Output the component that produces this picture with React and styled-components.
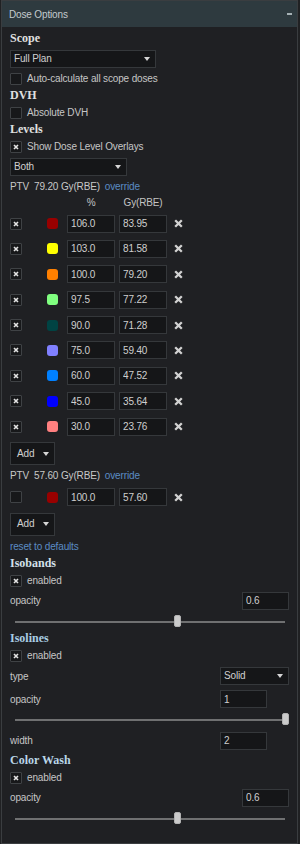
import React from 'react';
import styled, { createGlobalStyle } from 'styled-components';

const GlobalStyle = createGlobalStyle`
  html, body {
    margin: 0;
    padding: 0;
    background: #202123;
  }
  body {
    font-family: "Liberation Sans", Arial, sans-serif;
    letter-spacing: -0.15px;
  }
`;

const Panel = styled.div`
  box-sizing: border-box;
  width: 297px;
  min-height: 844px;
  margin-left: 1px;
  border: 1px solid #3a3d40;
  background: #1f2023;
  display: flex;
  flex-direction: column;
`;

const PanelHeader = styled.div`
  height: 26px;
  display: flex;
  align-items: center;
  justify-content: space-between;
  padding: 0 5px 0 7px;
  background: #2e3a3f;
  color: #c4cbce;
  font-size: 10px;
`;

const Collapse = styled.span`
  width: 5px;
  height: 2px;
  background: #a6b1b5;
`;

const PanelBody = styled.div`
  display: flex;
  flex-direction: column;
  gap: 5px;
  padding: 5.5px 8px 17px;
  font-size: 10px;
  color: #c6c6c6;
`;

const SectionTitle = styled.div`
  margin-top: -2px;
  height: 14px;
  line-height: 14px;
  font-family: "Liberation Serif", "Times New Roman", serif;
  font-weight: bold;
  font-size: 12px;
  letter-spacing: 0;
  color: ${p => p.$tone || '#e0e0e0'};
`;

const CheckRow = styled.label`
  display: flex;
  align-items: center;
  gap: 5px;
  height: 12px;
  line-height: 12px;
`;

const Box = styled.span`
  box-sizing: border-box;
  flex: none;
  width: 12px;
  height: 12px;
  display: flex;
  align-items: center;
  justify-content: center;
  background: #17181a;
  border: 1px solid #3f4245;
  border-radius: 1px;
`;

const Dropdown = styled.div`
  box-sizing: border-box;
  width: ${p => p.$w}px;
  height: ${p => p.$h || 18}px;
  margin-top: ${p => p.$mt || 0}px;
  display: flex;
  align-items: center;
  justify-content: space-between;
  padding: 0 5px 0 ${p => p.$pl || 3}px;
  background: #151618;
  border: 1px solid #35383b;
  color: #d0d0d0;
  line-height: 12px;
`;

const PtvLine = styled.div`
  height: 12px;
  line-height: 12px;
  color: #c8c8c8;
`;

const Dose = styled.span`
  margin-left: 5px;
`;

const Link = styled.span`
  margin-left: ${p => p.$ml || 0}px;
  color: #5b8cc5;
`;

const ColumnHead = styled.div`
  display: flex;
  height: 12px;
  line-height: 12px;
  margin-top: -1px;
  padding-left: 57px;
  gap: 4px;
  color: #c4c4c4;
`;

const HeadCell = styled.span`
  width: 48px;
  text-align: center;
`;

const LevelList = styled.div`
  display: flex;
  flex-direction: column;
  gap: 7.4px;
  margin-top: 1px;
`;

const LevelRow = styled.div`
  display: flex;
  align-items: center;
  height: 18px;
`;

const Swatch = styled.span`
  width: 11px;
  height: 11px;
  margin: 0 9px 0 25px;
  border-radius: 3px;
  background: ${p => p.$color};
`;

const NumInput = styled.input`
  box-sizing: border-box;
  width: ${p => p.$w || 48}px;
  height: 18px;
  margin: 0;
  padding: 0 3px;
  background: #151618;
  border: 1px solid #35383b;
  border-radius: 0;
  color: #cfcfcf;
  font-family: "Liberation Sans", Arial, sans-serif;
  font-size: 10px;
  letter-spacing: -0.15px;
  outline: none;
  & + & {
    margin-left: 4px;
  }
`;

const Remove = styled.span`
  display: flex;
  margin-left: 7px;
`;

const FieldRow = styled.div`
  display: grid;
  grid-template-columns: 1fr ${p => p.$col}px;
  align-items: center;
  height: 18px;
`;

const SliderWrap = styled.div`
  height: 12px;
  padding: 0 4px 0 5px;
  margin-bottom: 1.5px;
`;

const Track = styled.div`
  position: relative;
  height: 12px;
  &::before {
    content: '';
    position: absolute;
    left: 0;
    right: 0;
    top: 6px;
    height: 2px;
    background: #6f7071;
  }
`;

const Thumb = styled.span`
  position: absolute;
  top: 0;
  width: 7px;
  height: 12px;
  margin-left: -3.5px;
  box-sizing: border-box;
  background: #cbcbcb;
  border: 1px solid #b2b2b2;
  border-radius: 2px;
`;

const Arrow = () => (
  <svg width="6" height="4" viewBox="0 0 6 4">
    <path d="M0 0 H6 L3 4 Z" fill="#d6d6d6" />
  </svg>
);

const Check = ({ checked }) => (
  <Box>
    {checked && (
      <svg width="6" height="6" viewBox="0 0 6 6">
        <path d="M1 1 L5 5 M5 1 L1 5" stroke="#e4e4e4" strokeWidth="1.6" />
      </svg>
    )}
  </Box>
);

const RemoveIcon = () => (
  <Remove>
    <svg width="9" height="9" viewBox="0 0 9 9">
      <path d="M1.2 1.2 L7.8 7.8 M7.8 1.2 L1.2 7.8" stroke="#d2d2d2" strokeWidth="2.3" />
    </svg>
  </Remove>
);

const Slider = ({ value }) => (
  <SliderWrap>
    <Track>
      <Thumb style={{ left: `${value * 100}%` }} />
    </Track>
  </SliderWrap>
);

const primaryLevels = [
  { pct: '106.0', gy: '83.95', color: '#980000' },
  { pct: '103.0', gy: '81.58', color: '#ffff00' },
  { pct: '100.0', gy: '79.20', color: '#ff8000' },
  { pct: '97.5', gy: '77.22', color: '#80ff80' },
  { pct: '90.0', gy: '71.28', color: '#004343' },
  { pct: '75.0', gy: '59.40', color: '#8080ff' },
  { pct: '60.0', gy: '47.52', color: '#0080ff' },
  { pct: '45.0', gy: '35.64', color: '#0000ff' },
  { pct: '30.0', gy: '23.76', color: '#ff8080' },
];

const secondaryLevels = [
  { pct: '100.0', gy: '57.60', color: '#980000', off: true },
];

const Levels = ({ rows }) => (
  <LevelList>
    {rows.map(r => (
      <LevelRow key={r.pct + r.gy}>
        <Check checked={!r.off} />
        <Swatch $color={r.color} />
        <NumInput defaultValue={r.pct} />
        <NumInput defaultValue={r.gy} />
        <RemoveIcon />
      </LevelRow>
    ))}
  </LevelList>
);

const AddButton = () => (
  <Dropdown $w={45} $h={23} $pl={6} $mt={1.5}>
    <span>Add</span>
    <Arrow />
  </Dropdown>
);

export default function App() {
  return (
    <>
      <GlobalStyle />
      <Panel>
        <PanelHeader>
          <span>Dose Options</span>
          <Collapse />
        </PanelHeader>
        <PanelBody>
          <SectionTitle>Scope</SectionTitle>
          <Dropdown $w={146}>
            <span>Full Plan</span>
            <Arrow />
          </Dropdown>
          <CheckRow>
            <Check />
            Auto-calculate all scope doses
          </CheckRow>

          <SectionTitle>DVH</SectionTitle>
          <CheckRow>
            <Check />
            Absolute DVH
          </CheckRow>

          <SectionTitle>Levels</SectionTitle>
          <CheckRow>
            <Check checked />
            Show Dose Level Overlays
          </CheckRow>
          <Dropdown $w={117}>
            <span>Both</span>
            <Arrow />
          </Dropdown>
          <PtvLine>
            PTV<Dose>79.20 Gy(RBE)</Dose>
            <Link $ml={5}>override</Link>
          </PtvLine>
          <ColumnHead>
            <HeadCell>%</HeadCell>
            <HeadCell>Gy(RBE)</HeadCell>
          </ColumnHead>
          <Levels rows={primaryLevels} />
          <AddButton />
          <PtvLine>
            PTV<Dose>57.60 Gy(RBE)</Dose>
            <Link $ml={5}>override</Link>
          </PtvLine>
          <Levels rows={secondaryLevels} />
          <AddButton />
          <PtvLine>
            <Link>reset to defaults</Link>
          </PtvLine>

          <SectionTitle $tone="#d4e1ea">Isobands</SectionTitle>
          <CheckRow>
            <Check checked />
            enabled
          </CheckRow>
          <FieldRow $col={47}>
            <span>opacity</span>
            <NumInput $w={47} defaultValue="0.6" />
          </FieldRow>
          <Slider value={0.6} />

          <SectionTitle $tone="#a9cde4">Isolines</SectionTitle>
          <CheckRow>
            <Check checked />
            enabled
          </CheckRow>
          <FieldRow $col={69}>
            <span>type</span>
            <Dropdown $w={69}>
              <span>Solid</span>
              <Arrow />
            </Dropdown>
          </FieldRow>
          <FieldRow $col={69}>
            <span>opacity</span>
            <NumInput $w={47} defaultValue="1" />
          </FieldRow>
          <Slider value={1} />
          <FieldRow $col={69}>
            <span>width</span>
            <NumInput $w={47} defaultValue="2" />
          </FieldRow>

          <SectionTitle $tone="#bad6e8">Color Wash</SectionTitle>
          <CheckRow>
            <Check checked />
            enabled
          </CheckRow>
          <FieldRow $col={47}>
            <span>opacity</span>
            <NumInput $w={47} defaultValue="0.6" />
          </FieldRow>
          <Slider value={0.6} />
        </PanelBody>
      </Panel>
    </>
  );
}
